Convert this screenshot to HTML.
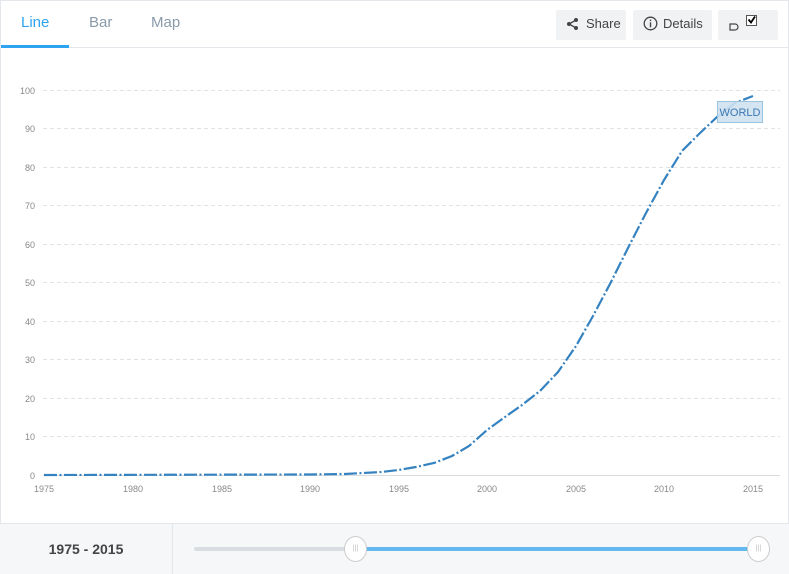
<!DOCTYPE html>
<html><head><meta charset="utf-8"><style>
*{box-sizing:border-box;margin:0;padding:0}
body{width:789px;height:574px;background:#fff;font-family:"Liberation Sans",sans-serif;position:relative;overflow:hidden}
.frame{position:absolute;left:0;top:0;width:789px;height:574px;border:1px solid #e3e6ea}
.tabs{position:absolute;top:0;left:0;right:0;height:48px;border-bottom:1px solid #e3e6ea}
.tab{position:absolute;top:14px;font-size:15px;color:#8a9aaa}
.ul{position:absolute;left:1px;top:45px;width:68px;height:3px;background:#2ea3f2}
.btn{position:absolute;top:10px;height:30px;background:#f1f2f4;border-radius:2px;font-size:13px;color:#444;display:flex;align-items:center;padding-bottom:3px}
.bottom{position:absolute;left:0;right:0;top:523px;height:51px;background:#f6f7f9;border-top:1px solid #e3e6ea}
.h{position:absolute;top:12px;width:23px;height:26px;border-radius:50%;background:#fff;border:1px solid #ccc;font-size:7px;color:#bbb;text-align:center;line-height:24px}
</style></head><body>
<div class="frame"></div>
<div class="tabs">
<div class="tab" style="left:21px;color:#2ea3f2">Line</div>
<div class="tab" style="left:89px">Bar</div>
<div class="tab" style="left:151px">Map</div>
<div class="ul"></div>
</div>
<div class="btn" style="left:556px;width:70px"><svg width="14" height="14" style="margin:0 6px 0 10px" viewBox="0 0 14 14"><circle cx="10" cy="3" r="2" fill="#444"/><circle cx="3" cy="7" r="2" fill="#444"/><circle cx="10" cy="11" r="2" fill="#444"/><path d="M10 3L3 7L10 11" stroke="#444" stroke-width="1.3" fill="none"/></svg>Share</div>
<div class="btn" style="left:633px;width:79px"><svg width="15" height="15" style="margin:0 5px 0 10px" viewBox="0 0 15 15"><circle cx="7.5" cy="7.5" r="6.3" stroke="#444" stroke-width="1.3" fill="none"/><rect x="6.8" y="6.3" width="1.4" height="5" fill="#444"/><rect x="6.8" y="3.6" width="1.4" height="1.5" fill="#444"/></svg>Details</div>
<div class="btn" style="left:718px;width:60px"><svg width="40" height="20" style="margin-left:10px" viewBox="0 0 40 20"><path d="M2 10h5a3 3 0 0 1 0 6H2z" stroke="#444" stroke-width="1.2" fill="none"/><rect x="18.5" y="1.5" width="10" height="10" fill="#fff" stroke="#555"/><path d="M20.5 5.5l2.5 3 4-6" stroke="#000" stroke-width="1.8" fill="none"/></svg></div>
<svg style="position:absolute;left:0;top:0" width="789" height="520">
<g stroke="#e2e2e2" stroke-dasharray="4 3" stroke-width="1">
<line x1="43" x2="780" y1="90.5" y2="90.5"/><line x1="43" x2="780" y1="128.5" y2="128.5"/><line x1="43" x2="780" y1="167.5" y2="167.5"/><line x1="43" x2="780" y1="205.5" y2="205.5"/><line x1="43" x2="780" y1="244.5" y2="244.5"/><line x1="43" x2="780" y1="282.5" y2="282.5"/><line x1="43" x2="780" y1="321.5" y2="321.5"/><line x1="43" x2="780" y1="359.5" y2="359.5"/><line x1="43" x2="780" y1="398.5" y2="398.5"/><line x1="43" x2="780" y1="436.5" y2="436.5"/>
</g>
<line x1="43" x2="780" y1="475.5" y2="475.5" stroke="#d8dce0"/>
<g font-size="9" fill="#888" text-anchor="end" font-family="Liberation Sans">
<text x="35" y="94">100</text><text x="35" y="132">90</text><text x="35" y="171">80</text><text x="35" y="209">70</text><text x="35" y="248">60</text><text x="35" y="286">50</text><text x="35" y="325">40</text><text x="35" y="363">30</text><text x="35" y="402">20</text><text x="35" y="440">10</text><text x="35" y="479">0</text>
</g>
<g font-size="9" fill="#888" text-anchor="middle" font-family="Liberation Sans">
<text x="44" y="492">1975</text><text x="133" y="492">1980</text><text x="222" y="492">1985</text><text x="310" y="492">1990</text><text x="399" y="492">1995</text><text x="487" y="492">2000</text><text x="576" y="492">2005</text><text x="664" y="492">2010</text><text x="753" y="492">2015</text>
</g>
<polyline fill="none" stroke="#3582c0" stroke-width="2.2" stroke-dasharray="13 2.5 2 2.5" points="44,475 310,474.5 345,474 381,472 398.5,470 416,467 434,463 452,456 469,446 487,430 505,417 522,405 540,391 558,372 576,346 593,316 611,282 629,246 646,213 664,180 682,151 699,134 717,117 735,103 753,96"/>
<rect x="717.5" y="101.5" width="45" height="21" fill="#cfe1f0" fill-opacity="0.9" stroke="#9cc3e0"/>
<text x="740" y="116" font-size="11" fill="#3a78b5" text-anchor="middle" font-family="Liberation Sans">WORLD</text>
</svg>
<div class="bottom">
<div style="position:absolute;left:0;top:0;width:173px;height:50px;border-right:1px solid #e3e6ea;text-align:center;line-height:50px;font-size:14px;font-weight:bold;color:#444">1975 - 2015</div>
<div style="position:absolute;left:194px;top:23px;width:162px;height:4px;background:#d9dde2;border-radius:2px"></div>
<div style="position:absolute;left:356px;top:23px;width:402px;height:4px;background:#62b8ef"></div>
<div class="h" style="left:344px">|||</div>
<div class="h" style="left:747px">|||</div>
</div>
</body></html>
